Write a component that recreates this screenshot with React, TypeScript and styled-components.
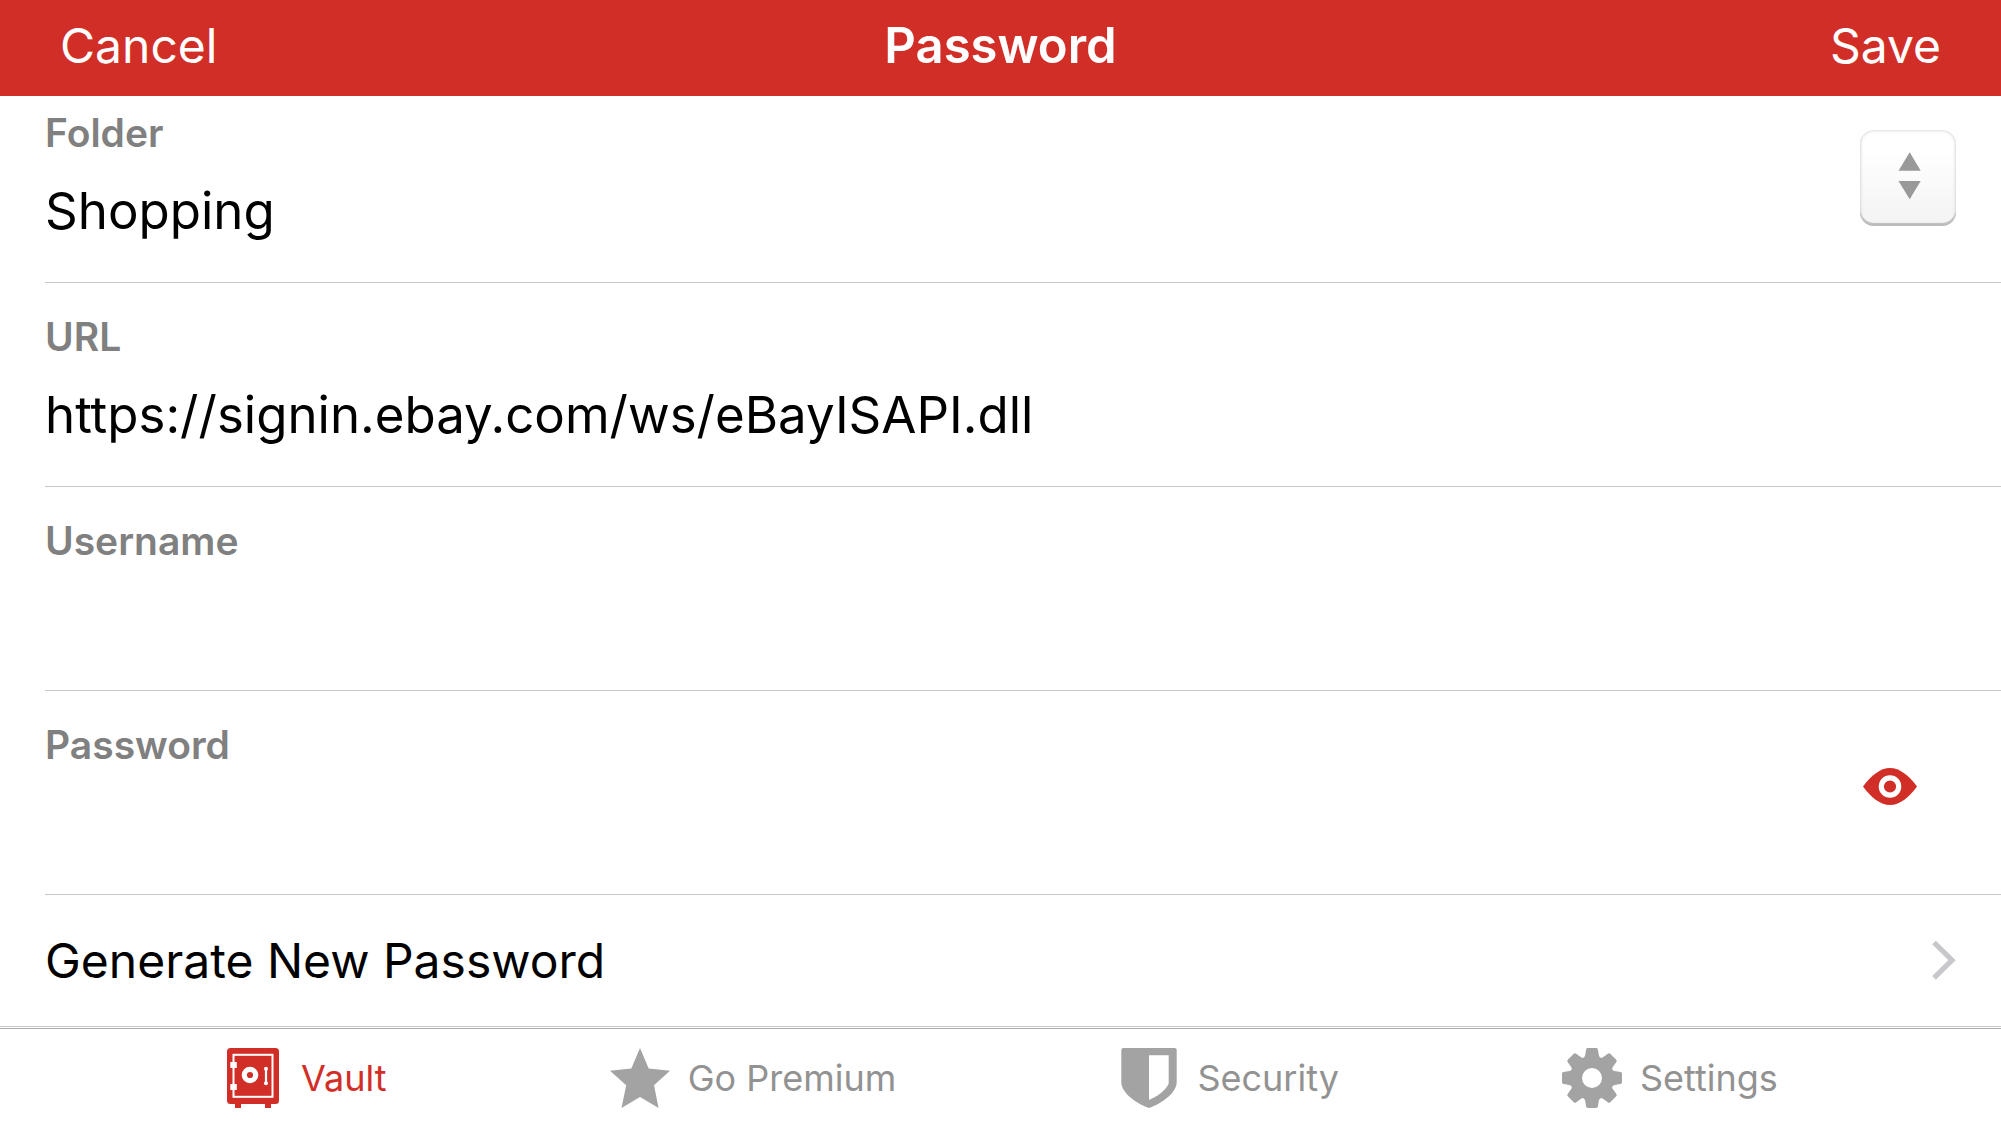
import React, { useState } from "react";
import styled, { createGlobalStyle } from "styled-components";

const color = {
  red: "#d22e28",
  label: "#808080",
  line: "#c8c7cc",
  barLine: "#acacb0",
  icon: "#a3a3a3",
  tabText: "#929292",
  chevron: "#c7c7cc",
};

const GlobalStyle = createGlobalStyle`
  *, *::before, *::after { box-sizing: border-box; }
  body { margin: 0; background: #fff; }
  body, button, input, select {
    font-family: Inter, "Liberation Sans", sans-serif;
  }
  button, input, select {
    margin: 0;
    padding: 0;
    border: 0;
    border-radius: 0;
    background: none;
    color: inherit;
    appearance: none;
  }
  button { cursor: pointer; }
  svg { display: block; }
`;

const Screen = styled.div`
  display: flex;
  flex-direction: column;
  min-height: 100vh;
  color: #000;
`;

const NavBar = styled.header`
  display: grid;
  grid-template-columns: 1fr auto 1fr;
  align-items: center;
  height: 96px;
  padding: 0 60px 4px;
  background: ${color.red};
  color: #fff;
`;

const NavTitle = styled.h1`
  margin: 0;
  font-size: 49px;
  line-height: 64px;
  font-weight: 600;
`;

const NavButton = styled.button<{ $end?: boolean }>`
  justify-self: ${(p) => (p.$end ? "end" : "start")};
  font-size: 48px;
  line-height: 64px;
  font-weight: 400;
`;

const Form = styled.form`
  flex: 1;
`;

const Row = styled.div<{ $tucked?: boolean }>`
  display: flex;
  align-items: flex-start;
  margin-left: 45px;
  padding: ${(p) => (p.$tucked ? 17 : 34)}px 45px 39px 0;
  border-bottom: 1px solid ${color.line};
`;

const Field = styled.div`
  flex: 1;
  min-width: 0;
  display: flex;
  flex-direction: column;
  gap: 26px;
`;

const Label = styled.label`
  font-size: 39px;
  line-height: 40px;
  font-weight: 600;
  color: ${color.label};
`;

const TextInput = styled.input`
  width: 100%;
  height: 64px;
  font-size: 51px;
  line-height: 64px;
  outline: none;
`;

const Select = styled.select`
  width: 100%;
  height: 64px;
  font-size: 51px;
  line-height: 64px;
  outline: none;
`;

const StepperButton = styled.button`
  width: 96px;
  height: 96px;
  margin-top: 17px;
  border-radius: 14px;
  background: linear-gradient(#fff 20%, #f4f3f4);
  box-shadow: inset 0 -3px 1px #bcbcbc, inset 0 0 3px 1px #dcdcdc;
`;

const EyeButton = styled.button`
  display: flex;
  align-items: center;
  justify-content: center;
  width: 132px;
  height: 122px;
`;

const LinkRow = styled.button`
  display: flex;
  align-items: center;
  justify-content: space-between;
  width: 100%;
  height: 132px;
  padding: 0 45px;
  border-bottom: 1px solid ${color.line};
  font-size: 48px;
  line-height: 64px;
  text-align: left;
`;

const TabBar = styled.nav`
  display: flex;
  justify-content: space-evenly;
  margin-top: 1px;
  border-top: 1px solid ${color.barLine};
`;

const Tab = styled.button<{ $active?: boolean }>`
  display: flex;
  align-items: center;
  gap: 18px;
  height: 96px;
  padding-top: 1px;
  font-size: 36px;
  line-height: 40px;
  color: ${(p) => (p.$active ? color.red : color.tabText)};
`;

const StepperIcon = () => (
  <svg width="96" height="96" viewBox="0 0 96 96" fill="#999" aria-hidden="true">
    <path d="M49.7 22.3 60.7 40.8H38.5ZM38.5 51H60.7L49.7 69.3Z" />
  </svg>
);

const EyeIcon = () => (
  <svg width="54" height="37" viewBox="0 0 54 37" aria-hidden="true">
    <path fill={color.red} d="M0 18.5C8 7.5 17.5 0 27 0S46 7.5 54 18.5C46 29.5 36.5 37 27 37S8 29.5 0 18.5Z" />
    <circle cx="27" cy="18.5" r="8.7" fill="none" stroke="#fff" strokeWidth="5.2" />
  </svg>
);

const ChevronIcon = () => (
  <svg width="24" height="40" viewBox="0 0 24 40" fill="none" stroke={color.chevron} strokeWidth="5.2" aria-hidden="true">
    <path d="M2 1.5 20 19.2 2 36.9" />
  </svg>
);

const VaultIcon = () => (
  <svg width="60" height="60" viewBox="0 0 60 60" aria-hidden="true">
    <rect x="4" width="52" height="56" rx="3.5" fill={color.red} />
    <path fill={color.red} d="M12 55h6v5h-6zM42 55h6v5h-6z" />
    <rect x="10.5" y="6.8" width="39" height="42" fill="none" stroke="#fff" strokeWidth="2" />
    <path fill="#fff" d="M7.3 14h6.5v6H7.3zM7.3 36h6.5v6H7.3z" />
    <circle cx="27" cy="27" r="5.7" fill="none" stroke="#fff" strokeWidth="5.2" />
    <path d="M43 20.7v14.6" stroke="#fff" strokeWidth="2.2" />
    <circle cx="43" cy="20.7" r="2" fill="#fff" />
    <circle cx="43" cy="35.3" r="2" fill="#fff" />
  </svg>
);

const StarIcon = () => (
  <svg width="60" height="60" viewBox="0 0 60 60" fill={color.icon} aria-hidden="true">
    <path d="M30 0 38.7 20.5 60 22.7 44 37.3 48.6 60 30 49 11.5 60 16.2 37.3 0 22.7 21.3 20.5Z" />
  </svg>
);

const ShieldIcon = () => (
  <svg width="60" height="60" viewBox="0 0 60 60" fill={color.icon} aria-hidden="true">
    <path
      fillRule="evenodd"
      d="M4.3 0H55.7Q57.7 0 57.7 2V34C57.7 44 45 54.5 30 60C15 54.5 2.3 44 2.3 34V2Q2.3 0 4.3 0ZM30 7.2V52C38 48.5 46.5 43 49.7 35.5V7.2Z"
    />
  </svg>
);

const GearIcon = () => (
  <svg width="60" height="60" viewBox="-30 -30 60 60" fill={color.icon} aria-hidden="true">
    <circle r="22" />
    {[0, 45, 90, 135, 180, 225, 270, 315].map((angle) => (
      <path
        key={angle}
        transform={`rotate(${angle})`}
        d="M-9-19.5Q-7.2-21-6.9-22.5L-5.9-28.6Q-5.6-30-4.2-30H4.2Q5.6-30 5.9-28.6L6.9-22.5Q7.2-21 9-19.5Z"
      />
    ))}
    <circle r="10" fill="#fff" />
  </svg>
);

const tabs = [
  { name: "Vault", Icon: VaultIcon },
  { name: "Go Premium", Icon: StarIcon },
  { name: "Security", Icon: ShieldIcon },
  { name: "Settings", Icon: GearIcon },
];

export default function App() {
  const [url, setUrl] = useState("https://signin.ebay.com/ws/eBayISAPI.dll");
  const [username, setUsername] = useState("");
  const [password, setPassword] = useState("");
  const [revealed, setRevealed] = useState(false);
  const [active, setActive] = useState("Vault");

  return (
    <Screen>
      <GlobalStyle />
      <NavBar>
        <NavButton type="button">Cancel</NavButton>
        <NavTitle>Password</NavTitle>
        <NavButton type="button" $end>
          Save
        </NavButton>
      </NavBar>
      <Form>
        <Row $tucked>
          <Field>
            <Label htmlFor="folder">Folder</Label>
            <Select id="folder" defaultValue="Shopping">
              <option>Shopping</option>
            </Select>
          </Field>
          <StepperButton type="button" aria-label="Choose folder">
            <StepperIcon />
          </StepperButton>
        </Row>
        <Row>
          <Field>
            <Label htmlFor="url">URL</Label>
            <TextInput id="url" value={url} onChange={(e) => setUrl(e.target.value)} />
          </Field>
        </Row>
        <Row>
          <Field>
            <Label htmlFor="username">Username</Label>
            <TextInput id="username" value={username} onChange={(e) => setUsername(e.target.value)} />
          </Field>
        </Row>
        <Row>
          <Field>
            <Label htmlFor="password">Password</Label>
            <TextInput
              id="password"
              type={revealed ? "text" : "password"}
              value={password}
              onChange={(e) => setPassword(e.target.value)}
            />
          </Field>
          <EyeButton type="button" aria-label="Show password" onClick={() => setRevealed(!revealed)}>
            <EyeIcon />
          </EyeButton>
        </Row>
        <LinkRow type="button">
          Generate New Password
          <ChevronIcon />
        </LinkRow>
      </Form>
      <TabBar>
        {tabs.map(({ name, Icon }) => (
          <Tab key={name} type="button" $active={name === active} onClick={() => setActive(name)}>
            <Icon />
            {name}
          </Tab>
        ))}
      </TabBar>
    </Screen>
  );
}
